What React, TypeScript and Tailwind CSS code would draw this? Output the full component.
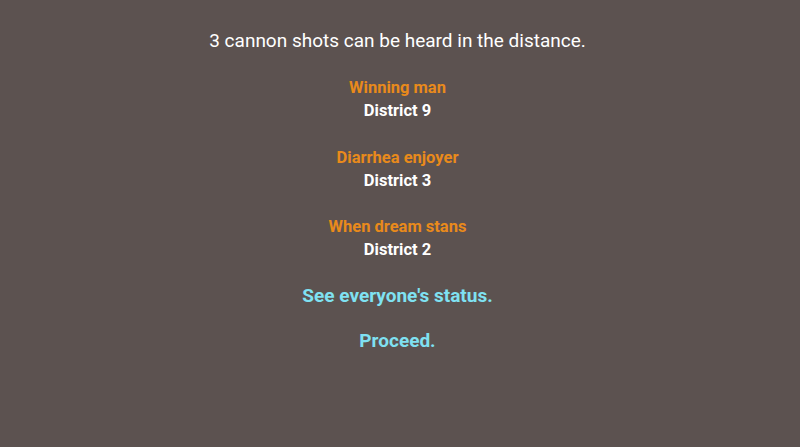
const deaths = [
  { name: "Winning man", district: 9 },
  { name: "Diarrhea enjoyer", district: 3 },
  { name: "When dream stans", district: 2 },
];

export default function App() {
  return (
    <div className="min-h-screen bg-[#5c5250] text-center font-['Roboto',sans-serif] pt-[27px] pr-[5px]">
      <p className="text-[19px] leading-[27px] text-white">
        {deaths.length} cannon shots can be heard in the distance.
      </p>

      <div className="mt-[22px] flex flex-col gap-[23.5px]">
        {deaths.map((d) => (
          <div key={d.name} className="text-[16.5px] leading-[23px] font-bold">
            <div className="text-[#e98a1b]">{d.name}</div>
            <div className="text-white">District {d.district}</div>
          </div>
        ))}
      </div>

      <div className="mt-[22px] flex flex-col gap-[19px] text-[19px] leading-[26px] font-bold text-[#7fe1f2]">
        <a className="cursor-pointer">See everyone's status.</a>
        <a className="cursor-pointer">Proceed.</a>
      </div>
    </div>
  );
}
